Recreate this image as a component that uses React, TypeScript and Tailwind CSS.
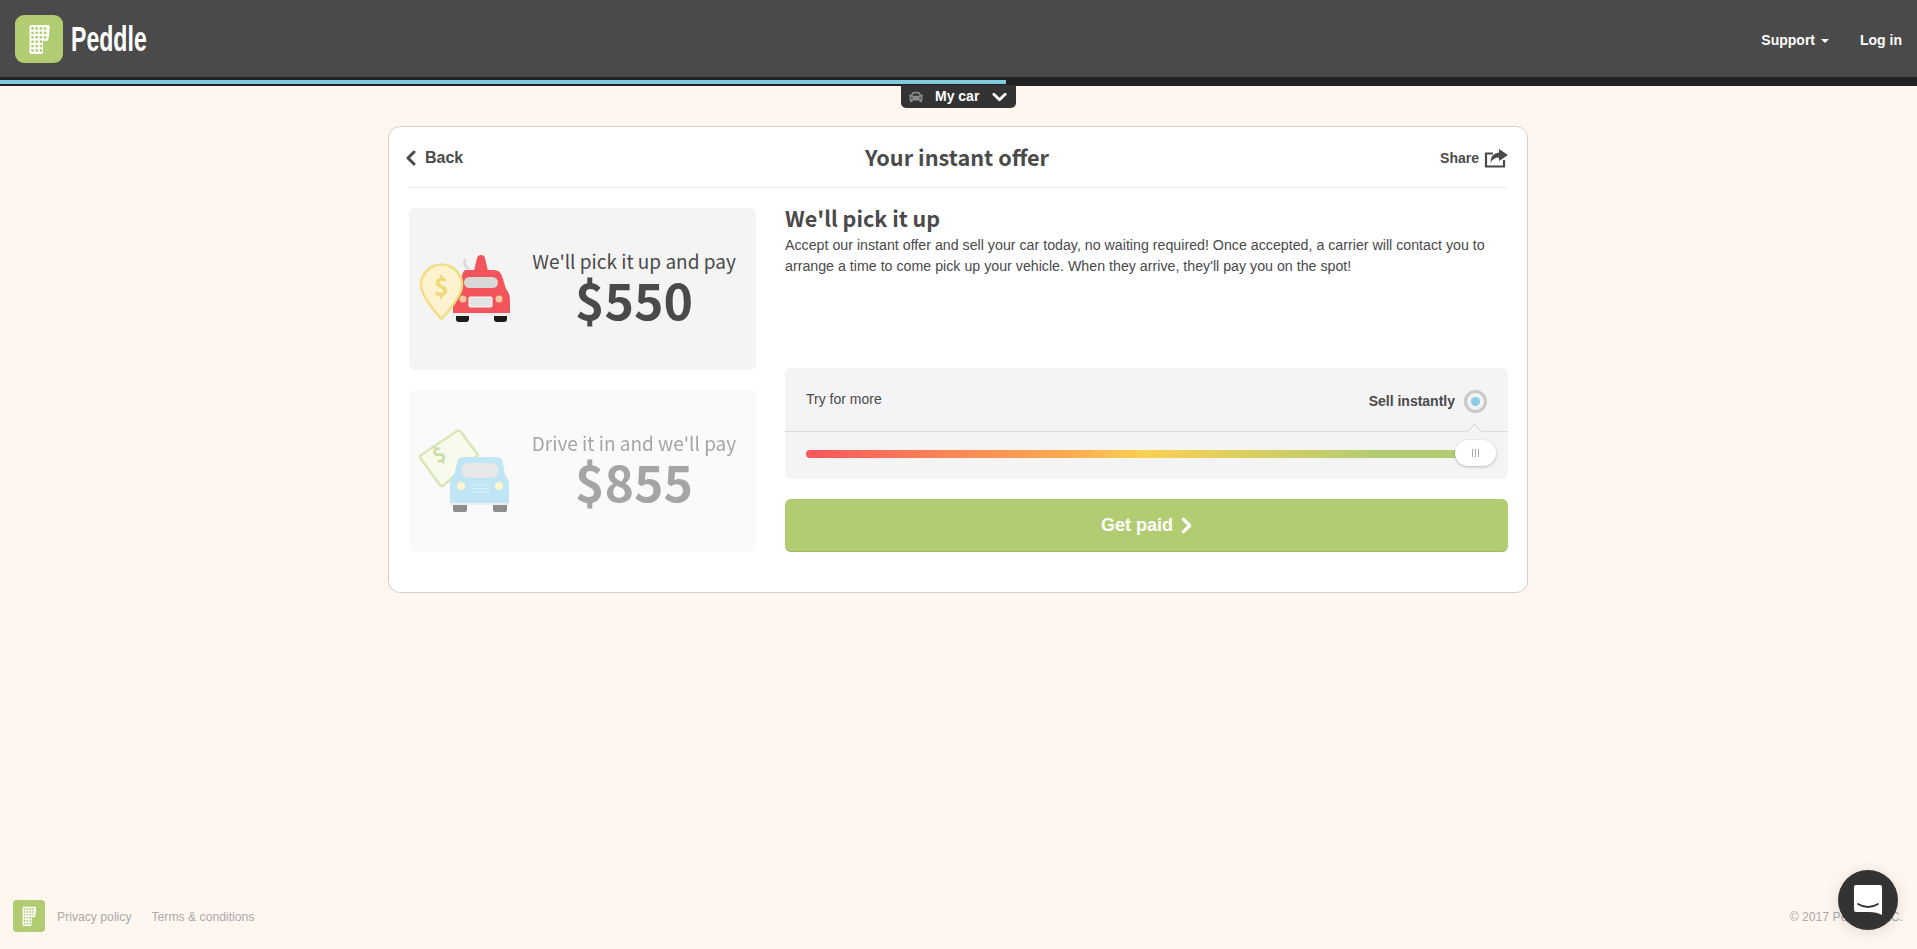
import React from "react";
import { FaCar } from "react-icons/fa";

const dots: [number, number][] = [];
for (let r = 0; r < 6; r++) for (let c = 0; c < 4; c++) dots.push([c, r]);

function Logo({ size, radius }: { size: number; radius: number }) {
  return (
    <svg width={size} height={size} viewBox="0 0 48 48" className="block shrink-0">
      <rect width="48" height="48" rx={radius} fill="#b2cc72" />
      <path d="M16 10 H33 Q35 10 34.7 12 L33.5 24 Q33.2 26 31 26 H28 V37 Q28 39 26 39 H16 Q14.5 39 14.5 37 V11.5 Q14.5 10 16 10 Z" fill="#fff" />
      {dots.map(([c, r]) =>
        r < 3 || c < 3 ? <circle key={c + "-" + r} cx={17.5 + c * 4.2} cy={13.5 + r * 4.4} r="1.4" fill="#b2cc72" /> : null
      )}
    </svg>
  );
}

function Chevron({ dir, w, h, sw, cls }: { dir: "left" | "right" | "down"; w: number; h: number; sw: number; cls?: string }) {
  const d = dir === "left" ? "M8 2 L2 8 L8 14" : dir === "right" ? "M2 2 L8 8 L2 14" : "M2 2 L8 8 L14 2";
  const vb = dir === "down" ? "0 0 16 10" : "0 0 10 16";
  return (
    <svg width={w} height={h} viewBox={vb} className={cls}>
      <path d={d} fill="none" stroke="currentColor" strokeWidth={sw} strokeLinecap="round" strokeLinejoin="round" />
    </svg>
  );
}

function RedCar() {
  return (
    <svg width="100" height="80" viewBox="0 0 100 80" className="block">
      <path d="M52 19 Q47 16 49 11" fill="none" stroke="#d8d8d8" strokeWidth="2.5" strokeLinecap="round" />
      <path d="M58 22 L61 9 Q62 6 65 6 Q68 6 69 9 L72 22 Z" fill="#f2545b" />
      <path d="M50 21 H78 Q84 21 86 27 L90 40 Q94 44 94 52 V64 H37 V52 Q38 46 43 41 L46 27 Q47 21 50 21 Z" fill="#f2545b" />
      <rect x="48" y="28" width="34" height="11" rx="5.5" fill="#d8d8d8" />
      <rect x="53" y="48" width="23" height="10" rx="1" fill="#e3e3e3" stroke="#fff" strokeWidth="1" />
      <circle cx="47" cy="50" r="3.5" fill="#f9c9a0" />
      <circle cx="83" cy="50" r="3.5" fill="#f9c9a0" />
      <rect x="37" y="64" width="57" height="3" fill="#eee" />
      <path d="M40 67 H53 V70 Q53 73 50 73 H43 Q40 73 40 70 Z" fill="#1b1b1b" />
      <path d="M78 67 H91 V70 Q91 73 88 73 H81 Q78 73 78 70 Z" fill="#1b1b1b" />
      <path d="M25.5 70 Q5 47 5 36 A20.5 20.5 0 0 1 46 36 Q46 47 25.5 70 Z" fill="#fdf3d0" stroke="#f5dd83" strokeWidth="2.5" />
      <text x="25.5" y="47" textAnchor="middle" fontFamily="'Noto Sans CJK SC', sans-serif" fontWeight="700" fontSize="25" fill="#f0d873">$</text>
    </svg>
  );
}

function BlueCar() {
  return (
    <svg width="100" height="84" viewBox="0 0 100 84" className="block">
      <path d="M41 2 Q43 1 45 3 L62 26 L28 56 Q26 58 24 56 L5 30 Q3 28 5 26 Z" fill="#f0f6d8" stroke="#b0cc70" strokeWidth="2.5" strokeLinejoin="round" />
      <text x="23" y="33" textAnchor="middle" transform="rotate(-30 23 26)" fontFamily="'Noto Sans CJK SC', sans-serif" fontWeight="700" fontSize="20" fill="#94bb4c">$</text>
      <path d="M47 28 H81 Q86 28 87 34 L89 46 Q93 50 93 56 V74 H34 V56 Q34 50 38 46 L41 34 Q42 28 47 28 Z" fill="#80cbe8" />
      <rect x="46" y="34" width="36" height="15" rx="6" fill="#d0d0d0" />
      <circle cx="45" cy="57" r="4" fill="#fbe9a0" />
      <circle cx="83" cy="57" r="4" fill="#fbe9a0" />
      <path d="M55 56 H74 M55 59.5 H74 M55 63 H74" stroke="#b5e2f3" strokeWidth="1" />
      <rect x="34" y="74" width="59" height="2" fill="#ddd" />
      <path d="M37 76 H51 V81 Q51 83 49 83 H39 Q37 83 37 81 Z" fill="#1b1b1b" />
      <path d="M77 76 H91 V81 Q91 83 89 83 H79 Q77 83 77 81 Z" fill="#1b1b1b" />
    </svg>
  );
}

function OptionPanel({ icon, label, price, faded }: { icon: React.ReactNode; label: string; price: string; faded?: boolean }) {
  return (
    <div className={faded ? "flex h-[162px] items-center rounded-md bg-[#f4f4f4] opacity-50" : "flex h-[162px] items-center rounded-md bg-[#f4f4f4]"}>
      <div className="w-[103px] shrink-0 pl-[7px]">{icon}</div>
      <div className="flex-1 pb-[10px] text-center font-['Noto_Sans_CJK_SC',sans-serif] text-[#4a4a4a]">
        <div className="text-[19px] leading-[28px]">{label}</div>
        <div className="text-[50px] font-bold leading-[46px]">{price}</div>
      </div>
    </div>
  );
}

export default function App() {
  return (
    <div className="relative flex min-h-[949px] flex-col bg-[#fff6f0] font-['Liberation_Sans',sans-serif] text-[#4a4a4a]">
      <header className="flex h-[77px] items-center justify-between bg-[#4a4a4a] pl-[15px] pr-[15px] text-white">
        <div className="flex items-center">
          <Logo size={48} radius={9} />
          <span className="ml-[8px] inline-block origin-left scale-x-[0.66] text-[35px] font-bold leading-none">Peddle</span>
        </div>
        <nav className="flex items-center pt-[3px] text-[14px] font-bold">
          <span className="flex items-center">
            Support
            <span className="ml-[6px] mt-[1px] h-0 w-0 border-x-[4px] border-t-[4px] border-x-transparent border-t-white" />
          </span>
          <span className="ml-[31px]">Log in</span>
        </nav>
      </header>
      <div className="h-[9px] bg-[#222] pt-[3px]">
        <div className="h-[4px] w-[1006px] bg-[#7fcce0]" />
      </div>
      <div className="flex justify-center">
        <div className="mt-[-1px] flex h-[23px] w-[115px] items-center whitespace-nowrap rounded-b-[5px] bg-[#333] pl-[8px] text-[14px] font-bold text-white">
          <FaCar className="text-[14px] text-[#8a8a8a]" />
          <span className="ml-[12px]">My car</span>
          <Chevron dir="down" w={15} h={10} sw={3} cls="ml-[13px]" />
        </div>
      </div>

      <main className="ml-[388px] mt-[18px] w-[1140px] rounded-[12px] border border-[#d8cfc9] bg-white pb-[40px] pl-[20px] pr-[19px]">
        <div className="flex h-[61px] items-center border-b border-[#ececec]">
          <div className="ml-[-3px] flex flex-1 items-center pt-[2px] text-[16px] font-bold">
            <Chevron dir="left" w={10} h={16} sw={3} />
            <span className="ml-[9px]">Back</span>
          </div>
          <h1 className="font-['Noto_Sans_CJK_SC',sans-serif] text-[21.7px] font-bold">Your instant offer</h1>
          <div className="flex flex-1 items-center justify-end pt-[3px] text-[14px] font-bold">
            Share
            <svg width="24" height="19" viewBox="0 0 24 19" className="ml-[5px]">
              <path d="M9 4.5 H2 V17.5 H20 V11" fill="none" stroke="currentColor" strokeWidth="2.2" />
              <path d="M15 0 L24 6 L15 12 V8.5 Q9 8.5 6.5 14 Q6.5 4.5 15 3.5 Z" fill="currentColor" />
            </svg>
          </div>
        </div>

        <div className="mt-[20px] flex gap-[29px]">
          <div className="flex w-[347px] flex-col gap-[20px]">
            <OptionPanel icon={<RedCar />} label="We'll pick it up and pay" price="$550" />
            <OptionPanel icon={<BlueCar />} label="Drive it in and we'll pay" price="$855" faded />
          </div>
          <div className="flex flex-1 flex-col">
            <h2 className="font-['Noto_Sans_CJK_SC',sans-serif] text-[21.5px] font-bold leading-[20px]">We'll pick it up</h2>
            <p className="mt-[7px] h-[133px] text-[14.22px] leading-[21px]">
              Accept our instant offer and sell your car today, no waiting required! Once accepted, a carrier will contact you to
              <br />
              arrange a time to come pick up your vehicle. When they arrive, they'll pay you on the spot!
            </p>
            <div className="rounded-md bg-[#f4f4f4]">
              <div className="flex h-[64px] items-center justify-between border-b border-[#dcdcdc] px-[21px]">
                <span className="mb-[1px] text-[14px]">Try for more</span>
                <span className="mt-[3px] flex items-center text-[14px] font-bold">
                  Sell instantly
                  <span className="ml-[9px] flex h-[23px] w-[23px] items-center justify-center rounded-full border-[3px] border-[#c9c9c9] bg-[#f2f2f2]">
                    <span className="h-[9px] w-[9px] rounded-full bg-[#8ccbe6]" />
                  </span>
                </span>
              </div>
              <div className="relative flex h-[47px] items-center pb-[3px] pl-[21px] pr-[28px]">
                <div className="h-[8px] flex-1 rounded-full bg-[linear-gradient(90deg,#f9565c_0%,#fdae4f_40%,#fbd050_50%,#b2cc72_85%,#b2cc72_100%)]" />
                <span className="absolute right-[12px] top-[8px] flex h-[26px] w-[41px] items-center justify-center gap-[2px] rounded-full bg-white shadow-[0_1px_3px_rgba(0,0,0,0.25)]">
                  <span className="h-[8px] w-px bg-[#aaa]" />
                  <span className="h-[8px] w-px bg-[#aaa]" />
                  <span className="h-[8px] w-px bg-[#aaa]" />
                </span>
                <span className="absolute right-[28px] top-[-6px] h-[11px] w-[11px] rotate-45 border-l border-t border-[#dcdcdc] bg-[#f4f4f4]" />
              </div>
            </div>
            <button className="mt-[20px] flex h-[53px] items-center justify-center rounded-md border-b border-[#9fba63] bg-[#b2cc72] pt-[1px] text-[18px] font-bold text-white">
              Get paid
              <Chevron dir="right" w={11} h={17} sw={3} cls="ml-[8px]" />
            </button>
          </div>
        </div>
      </main>

      <footer className="mt-auto flex items-center justify-between pb-[17px] pl-[13px] pr-[14px] text-[12.2px] text-[#aaa]">
        <div className="flex items-center">
          <Logo size={32} radius={6} />
          <span className="ml-[12px] pt-[2px]">Privacy policy</span>
          <span className="ml-[20px] pt-[2px]">Terms &amp; conditions</span>
        </div>
        <span className="pt-[2px]">© 2017 Peddle, LLC.</span>
      </footer>

      <div className="fixed left-[1838px] top-[870px] flex h-[60px] w-[60px] items-center justify-center rounded-full bg-[#333] shadow-[0_2px_16px_rgba(0,0,0,0.12)]">
        <svg width="30" height="32" viewBox="0 0 30 32">
          <path d="M3 1 H27 Q29 1 29 3 V31 Q24 28 16 28 H3 Q1 28 1 26 V3 Q1 1 3 1 Z" fill="#fff" />
          <path d="M5 20 Q15 26 25 20" fill="none" stroke="#333" strokeWidth="1.8" strokeLinecap="round" />
        </svg>
      </div>
    </div>
  );
}
